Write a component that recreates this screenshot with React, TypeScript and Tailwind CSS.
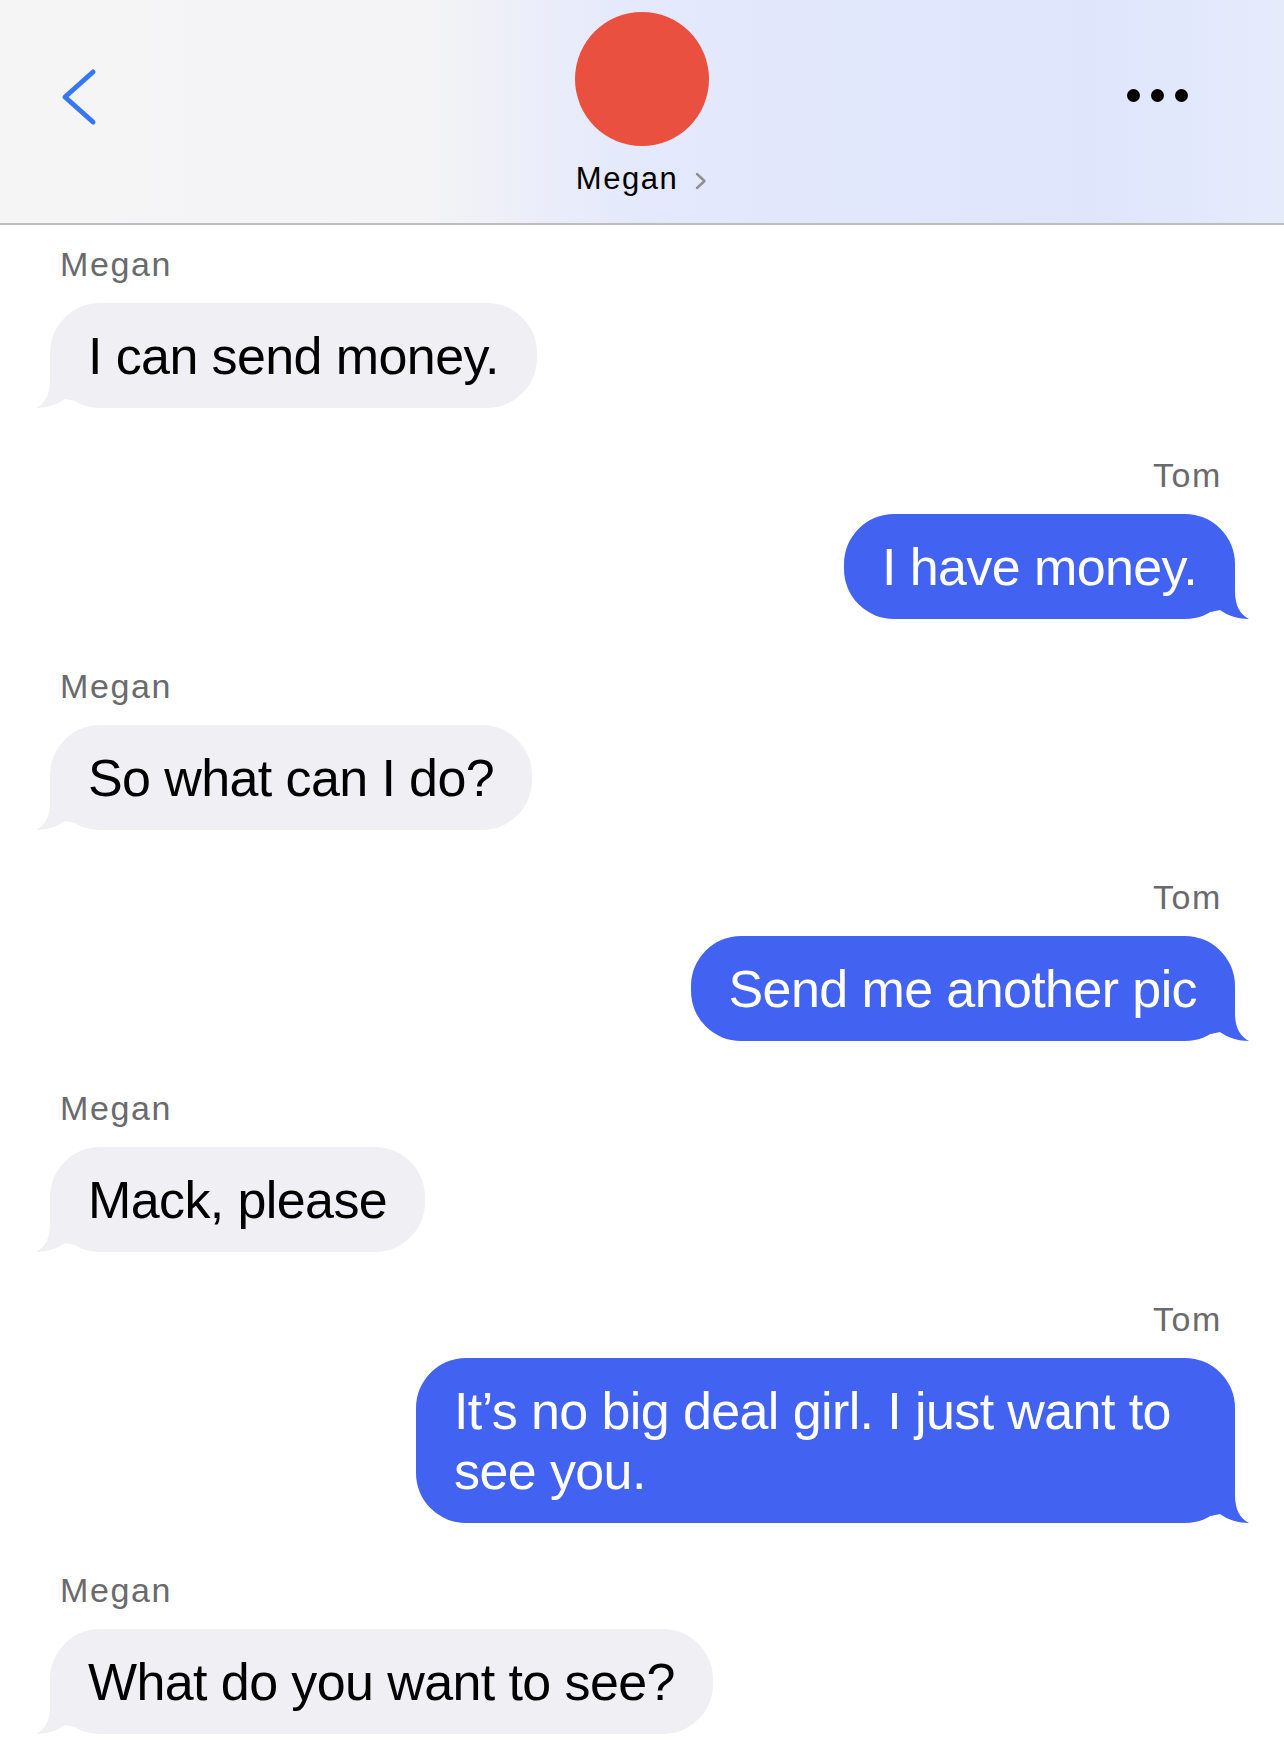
import React from "react";

type Msg = { from: "Megan" | "Tom"; text: string };

const messages: Msg[] = [
  { from: "Megan", text: "I can send money." },
  { from: "Tom", text: "I have money." },
  { from: "Megan", text: "So what can I do?" },
  { from: "Tom", text: "Send me another pic" },
  { from: "Megan", text: "Mack, please" },
  { from: "Tom", text: "It\u2019s no big deal girl. I just want to see you." },
  { from: "Megan", text: "What do you want to see?" },
];

function Tail({ color, side }: { color: string; side: "left" | "right" }) {
  return (
    <svg
      width="40"
      height="50"
      viewBox="0 0 40 50"
      className={
        side === "right"
          ? "absolute bottom-0 right-[-16px]"
          : "absolute bottom-0 left-[-16px] -scale-x-100"
      }
    >
      <path
        d="M24 0 L24 22 C24 37 29 45 38 50 C28 50 17 47 9 41 L0 43 L0 0 Z"
        fill={color}
      />
    </svg>
  );
}

function Bubble({ msg }: { msg: Msg }) {
  const sent = msg.from === "Tom";
  return (
    <div className={sent ? "flex flex-col items-end" : "flex flex-col items-start"}>
      <div
        className={
          "text-[34px] leading-[40px] tracking-[1.6px] text-[#6a6a6e] " +
          (sent ? "pr-[13px]" : "pl-[10px]")
        }
      >
        {msg.from}
      </div>
      <div
        className={
          "relative mt-[19px] max-w-[819px] rounded-[50px] px-[38px] py-[22.5px] text-[52px] leading-[60px] tracking-[-0.6px] " +
          (sent ? "bg-[#4262f1] text-white" : "bg-[#f0f0f4] text-black")
        }
      >
        <Tail color={sent ? "#4262f1" : "#f0f0f4"} side={sent ? "right" : "left"} />
        <span className="relative">{msg.text}</span>
      </div>
    </div>
  );
}

export default function App() {
  return (
    <div
      className="min-h-[1747px] w-[1284px] overflow-hidden bg-white"
      style={{ fontFamily: '"Liberation Sans", Arial, sans-serif' }}
    >
      <header className="grid h-[225px] grid-cols-[1fr_auto_1fr] border-b-2 border-[#bdbdc0] bg-[linear-gradient(90deg,#f5f5f6_0%,#f4f4f6_33%,#e4e9fc_49%,#dfe6fc_85%,#e6ebfc_100%)]">
        <div className="pl-[58px] pt-[67px]">
          <svg width="40" height="60" viewBox="0 0 40 60">
            <path
              d="M35 5 L7 30 L35 55"
              fill="none"
              stroke="#3478f6"
              strokeWidth="5"
              strokeLinecap="round"
              strokeLinejoin="round"
            />
          </svg>
        </div>
        <div className="flex flex-col items-center pt-[12px]">
          <div className="h-[134px] w-[134px] rounded-full bg-[#e9503f]" />
          <div className="mt-[15px] flex items-center text-[31px] leading-[36px] tracking-[1.5px] text-black">
            <span>Megan</span>
            <svg width="14" height="18" viewBox="0 0 14 18" className="ml-[16px] mt-[3px]">
              <path
                d="M3 2 L10.5 9 L3 16"
                fill="none"
                stroke="#8e8e93"
                strokeWidth="2.4"
                strokeLinecap="round"
                strokeLinejoin="round"
              />
            </svg>
          </div>
        </div>
        <div className="flex justify-end pr-[96px] pt-[89px]">
          <div className="flex gap-[11px]">
            <div className="h-[13px] w-[13px] rounded-full bg-black" />
            <div className="h-[13px] w-[13px] rounded-full bg-black" />
            <div className="h-[13px] w-[13px] rounded-full bg-black" />
          </div>
        </div>
      </header>
      <main className="flex flex-col gap-[47px] pl-[50px] pr-[49px] pt-[19px]">
        {messages.map((m, i) => (
          <Bubble key={i} msg={m} />
        ))}
      </main>
    </div>
  );
}
